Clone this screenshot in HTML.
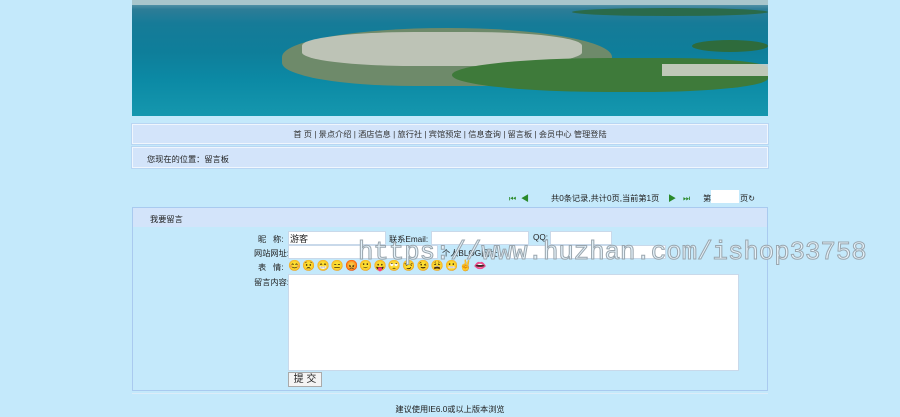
<!DOCTYPE html>
<html><head><meta charset="utf-8"><style>
body{margin:0;width:900px;height:417px;overflow:hidden;background:#c4e9fb;font-family:"Liberation Sans","Noto Sans CJK SC",sans-serif;font-size:8.2px;color:#222;position:relative}
.a{position:absolute;white-space:nowrap}
.bar{position:absolute;left:132px;width:634px;background:#d3e4fa;border:1px solid #f0f6fd;box-shadow:0 0 0 1px #b9d6f3}
.in{position:absolute;background:#fff;border:1px solid #c9d9ea;height:12px;box-sizing:border-box}
</style></head><body>
<div class="a" style="left:132px;top:0;width:636px;height:116px;overflow:hidden;background:linear-gradient(180deg,#7aa6b6 0,#2d7d97 8%,#167b98 20%,#0e7e9a 45%,#0c8aa5 70%,#1597ae 100%)">
<div class="a" style="left:0;top:0;width:636px;height:5px;background:#a9c6cc"></div>
<div class="a" style="left:440px;top:8px;width:196px;height:8px;background:#2a6a4a;border-radius:50%"></div>
<div class="a" style="left:560px;top:40px;width:76px;height:12px;background:#2e6b3c;border-radius:50%"></div>
<div class="a" style="left:150px;top:28px;width:330px;height:58px;background:#6e8a6a;border-radius:50% 50% 40% 40%"></div>
<div class="a" style="left:170px;top:32px;width:280px;height:34px;background:#d8d6d0;border-radius:40%;opacity:.75"></div>
<div class="a" style="left:320px;top:58px;width:316px;height:34px;background:#3e7a3a;border-radius:50% 30% 40% 50%"></div>
<div class="a" style="left:530px;top:64px;width:106px;height:12px;background:#e0dcd8;opacity:.8"></div>
</div>
<div class="bar" style="top:124px;height:18px"></div>
<div class="a" style="left:132px;width:636px;top:128px;text-align:center;color:#333">首 页 | 景点介绍 | 酒店信息 | 旅行社 | 宾馆预定 | 信息查询 | 留言板 | 会员中心 管理登陆</div>
<div class="bar" style="top:147px;height:19px"></div>
<div class="a" style="left:147px;top:153px">您现在的位置：留言板</div>
<div class="a" style="left:509px;top:192px;color:#2a8a2a">⏮ &nbsp;◀</div>
<div class="a" style="left:551px;top:192px">共0条记录,共计0页,当前第1页</div>
<div class="a" style="left:668px;top:192px;color:#2a8a2a">▶ &nbsp;&nbsp;⏭</div>
<div class="a" style="left:703px;top:192px">第</div>
<div class="in" style="left:711px;top:190px;width:28px;height:13px;border-color:#fff"></div>
<div class="a" style="left:740px;top:192px">页↻</div>
<div class="a" style="left:132px;top:207px;width:634px;height:182px;border:1px solid #a9caef"></div>
<div class="a" style="left:133px;top:208px;width:634px;height:19px;background:#d3e4fa"></div>
<div class="a" style="left:150px;top:213px">我要留言</div>
<div class="a" style="left:258px;top:233px">昵 &nbsp;&nbsp;称:</div>
<div class="in" style="left:288px;top:231px;width:98px;height:14px;padding-left:1px;font-size:9px">游客</div>
<div class="a" style="left:389px;top:233px">联系Email:</div>
<div class="in" style="left:431px;top:231px;width:98px;height:14px"></div>
<div class="a" style="left:533px;top:233px">QQ:</div>
<div class="in" style="left:550px;top:231px;width:62px;height:14px"></div>
<div class="a" style="left:254px;top:247px">网站网址:</div>
<div class="in" style="left:288px;top:245px;width:150px;height:14px"></div>
<div class="a" style="left:442px;top:247px">个人BLOG网址:</div>
<div class="in" style="left:510px;top:245px;width:156px;height:14px"></div>
<div class="a" style="left:258px;top:261px">表 &nbsp;&nbsp;情:</div>
<div class="a" style="left:288px;top:259px;font-size:10.5px;letter-spacing:1.2px;color:#e8a800">😊😟😁😑😡🙂😛🙄😏😉😩😬✌👄</div>
<div class="a" style="left:254px;top:276px">留言内容:</div>
<div class="in" style="left:288px;top:274px;width:451px;height:97px"></div>
<div class="in" style="left:288px;top:372px;width:34px;height:15px;background:#f4f4f4;border-color:#aaa;font-size:10px;text-align:center;line-height:13px">提 交</div>
<div class="a" style="left:132px;top:393px;width:636px;height:1px;background:#dcecf8"></div>
<div class="a" style="left:132px;width:636px;top:403px;text-align:center">建议使用IE6.0或以上版本浏览</div>
<div class="a" style="left:358px;top:238px;font-family:'Liberation Mono',monospace;font-size:25.7px;color:#e6f3fb;-webkit-text-stroke:1px #9aa6ae">https://www.huzhan.com/ishop33758</div>
</body></html>
